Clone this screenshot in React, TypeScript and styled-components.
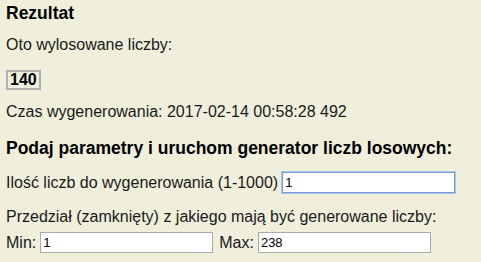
import styled, { createGlobalStyle } from "styled-components";

const GlobalStyle = createGlobalStyle`
  html, body {
    margin: 0;
    padding: 0;
    background: #efefdc;
  }
  body {
    font-family: "Liberation Sans", Arial, sans-serif;
    color: #1a1a1a;
  }
`;

const Page = styled.div`
  padding: 0 6px;
  height: 262px;
  overflow: hidden;
`;

const Title = styled.h3`
  margin: 0;
  padding-top: 2px;
  font-size: 17.5px;
  font-weight: bold;
  color: #000;
  line-height: 22px;
`;

const Text = styled.p<{ $top?: number }>`
  margin: ${(p) => p.$top ?? 0}px 0 0;
  font-size: 16px;
  line-height: 20px;
`;

const Number = styled.span`
  display: inline-block;
  margin-top: 15px;
  padding: 0 2px;
  border: 2px solid #b0b0b0;
  font-size: 16px;
  font-weight: bold;
  line-height: 16px;
  color: #000;
`;

const Heading = styled.h2`
  margin: 15px 0 0;
  font-size: 17.5px;
  font-weight: bold;
  line-height: 22px;
  color: #000;
`;

const Row = styled.div<{ $top?: number }>`
  display: flex;
  align-items: center;
  gap: 4px;
  margin-top: ${(p) => p.$top ?? 0}px;
  font-size: 16px;
  line-height: 20px;
`;

const Label = styled.label<{ $left?: number }>`
  margin-left: ${(p) => p.$left ?? 0}px;
`;

const Field = styled.input<{ $focus?: boolean }>`
  width: 173px;
  height: 21px;
  box-sizing: border-box;
  padding: 1px 2px;
  font-family: "Liberation Sans", Arial, sans-serif;
  font-size: 13px;
  color: #000;
  background: #fff;
  border: 1px solid ${(p) => (p.$focus ? "#7a9cd3" : "#a9a9a9")};
  box-shadow: ${(p) => (p.$focus ? "0 0 0 1px #a8c2ea" : "none")};
  outline: none;
`;

export default function App() {
  return (
    <>
      <GlobalStyle />
      <Page>
        <Title>Rezultat</Title>
        <Text $top={11}>Oto wylosowane liczby:</Text>
        <Number>140</Number>
        <Text $top={12}>Czas wygenerowania: 2017-02-14 00:58:28 492</Text>
        <Heading>Podaj parametry i uruchom generator liczb losowych:</Heading>
        <Row $top={13}>
          <Label htmlFor="ilosc">Ilość liczb do wygenerowania (1-1000)</Label>
          <Field id="ilosc" $focus defaultValue="1" />
        </Row>
        <Text $top={14}>Przedział (zamknięty) z jakiego mają być generowane liczby:</Text>
        <Row $top={5}>
          <Label htmlFor="min">Min:</Label>
          <Field id="min" defaultValue="1" />
          <Label htmlFor="max" $left={2}>Max:</Label>
          <Field id="max" defaultValue="238" />
        </Row>
      </Page>
    </>
  );
}
